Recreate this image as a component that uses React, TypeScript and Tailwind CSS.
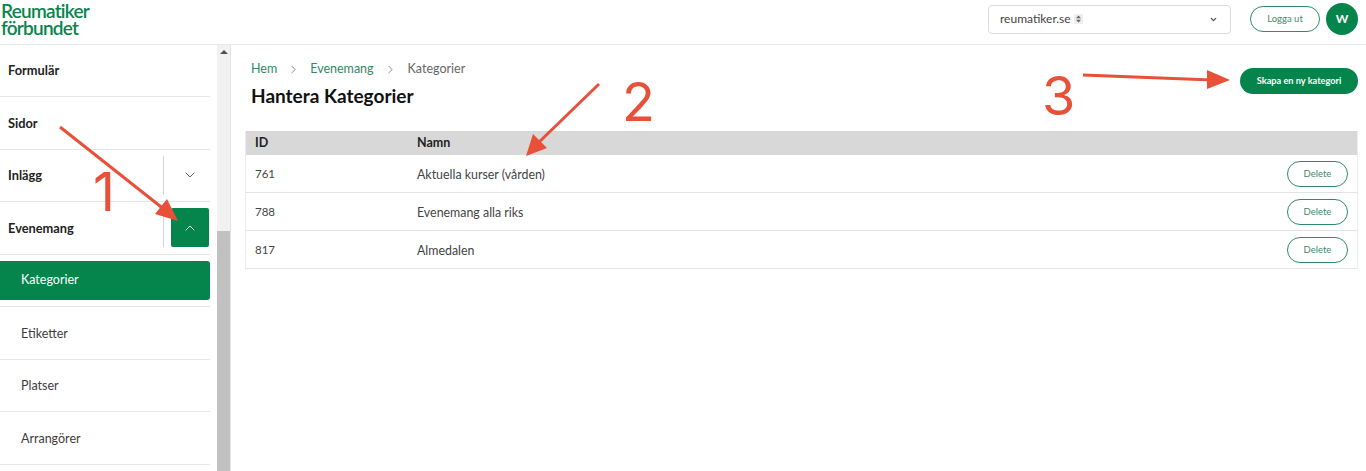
import React from "react";
import { ChevronDown, ChevronUp, ChevronRight } from "lucide-react";

function Row({ label, sub, toggle, active }: { label: string; sub?: boolean; toggle?: "down" | "up"; active?: boolean }) {
  return (
    <div className="h-[52.5px] border-b border-[#e6e6e6] flex items-center shrink-0">
      {active ? (
        <div className="flex-1 h-[39px] bg-[#05854b] rounded-r-[3px] flex items-center pl-[21px] pt-[1px] text-white text-[12.5px]">{label}</div>
      ) : (
        <div className={`flex-1 ${sub ? "text-[12.5px] pl-[21px] pt-[3px] text-[#3d3d3d]" : "text-[12.8px] pl-[8px] pt-[1px] font-bold text-[#222]"}`}>{label}</div>
      )}
      {toggle && (
        <div className="flex items-center h-[39px] mr-[1px]">
          <div className="w-px h-[39px] bg-[#d5d5d5]" />
          <div className={`ml-[7px] w-[38px] h-[39px] rounded-[2px] flex items-center justify-center ${toggle === "up" ? "bg-[#05854b] text-white" : "text-[#555]"}`}>
            {toggle === "up" ? <ChevronUp size={16} strokeWidth={1.4} /> : <ChevronDown size={16} strokeWidth={1.4} />}
          </div>
        </div>
      )}
    </div>
  );
}

function TableRow({ id, name }: { id: string; name: string }) {
  return (
    <div className="h-[38px] border-b border-[#e3e3e3] flex items-center text-[12.4px] text-[#444] shrink-0">
      <div className="w-[171px] pl-[9px] pt-[1px] text-[11.5px]">{id}</div>
      <div className="flex-1 pt-[3px]">{name}</div>
      <button className="mr-[9px] mt-[1px] w-[61px] h-[26px] border border-[#2f8a66] rounded-full text-[9.5px] text-[#3f8a6c] bg-white">Delete</button>
    </div>
  );
}

export default function App() {
  return (
    <div className="relative w-[1366px] h-[471px] overflow-hidden bg-white font-['Lato',sans-serif]">
      <header className="h-[45px] border-b border-[#e8e8e8] flex items-center">
        <div className="pl-[1px] -mt-[6px] text-[#05854b] text-[19px] leading-[17px] font-semibold tracking-[-0.75px]">
          <div>Reumatiker</div>
          <div>förbundet</div>
        </div>
        <div className="ml-auto flex items-center -mt-[6px]">
          <div className="w-[243px] h-[29px] border border-[#dcdcdc] rounded-[4px] flex items-center pl-[11px] pr-[12px] text-[12px] text-[#444]">
            <span>reumatiker.se</span>
            <svg className="ml-[3px] bg-[#eee]" width="9" height="10" viewBox="0 0 9 10" fill="#666">
              <polygon points="4.5,1.5 7,4.2 2,4.2" />
              <polygon points="4.5,8.5 7,5.8 2,5.8" />
            </svg>
            <ChevronDown size={9} strokeWidth={3} className="ml-auto text-[#444]" />
          </div>
          <button className="ml-[19px] w-[70px] h-[26px] border border-[#2f8a66] rounded-full text-[9.5px] text-[#3f8a6c] bg-white">Logga ut</button>
          <div className="ml-[6px] mr-[8px] w-[32px] h-[32px] rounded-full bg-[#05854b] text-white flex items-center justify-center text-[12px] font-bold">W</div>
        </div>
      </header>
      <div className="flex h-[426px]">
        <aside className="w-[217px] -mt-[0.5px] overflow-hidden flex flex-col pr-[7px]">
          <Row label="Formulär" />
          <Row label="Sidor" />
          <Row label="Inlägg" toggle="down" />
          <Row label="Evenemang" toggle="up" />
          <Row label="Kategorier" active />
          <Row label="Etiketter" sub />
          <Row label="Platser" sub />
          <Row label="Arrangörer" sub />
        </aside>
        <div className="w-[14px] bg-[#f1f1f1] border-r border-[#e3e3e3] flex flex-col">
          <div className="h-[186px] flex justify-center pt-[5px]">
            <div className="w-0 h-0 border-l-[4px] border-r-[4px] border-b-[4px] border-l-transparent border-r-transparent border-b-[#505050]" />
          </div>
          <div className="flex-1 bg-[#c1c1c1]" />
        </div>
        <main className="flex-1 pl-[14px] pr-[8px] flex flex-col">
          <div className="flex justify-between pl-[6px]">
            <div>
              <div className="mt-[15px] flex items-center text-[12.5px] text-[#2f8a66] leading-[18px]">
                <span>Hem</span>
                <ChevronRight size={13} strokeWidth={1.3} className="mx-[10px] text-[#555]" />
                <span>Evenemang</span>
                <ChevronRight size={13} strokeWidth={1.3} className="mx-[10.5px] text-[#555]" />
                <span className="text-[#666]">Kategorier</span>
              </div>
              <h1 className="mt-[6px] text-[19px] leading-[24px] font-bold text-[#111]">Hantera Kategorier</h1>
            </div>
            <button className="mt-[23px] w-[118px] h-[26px] rounded-full bg-[#05854b] text-white text-[9.2px] font-bold">Skapa en ny kategori</button>
          </div>
          <div className="mt-[23px] w-[1113px] border-x border-[#ececec] flex flex-col">
            <div className="h-[24px] bg-[#d8d8d8] flex items-center pt-[1px] text-[12.5px] font-bold text-[#222]">
              <div className="w-[171px] pl-[9px]">ID</div>
              <div>Namn</div>
            </div>
            <TableRow id="761" name="Aktuella kurser (vården)" />
            <TableRow id="788" name="Evenemang alla riks" />
            <TableRow id="817" name="Almedalen" />
          </div>
        </main>
      </div>

      <svg className="absolute inset-0 pointer-events-none" width="1366" height="471" viewBox="0 0 1366 471" fill="none">
        <g stroke="#e8503a" strokeWidth="3">
          <line x1="60" y1="127" x2="165" y2="210" />
          <line x1="599" y1="84" x2="535" y2="146" />
          <line x1="1083" y1="75" x2="1212" y2="80" />
        </g>
        <g fill="#e8503a">
          <polygon points="178,221 155,214 167,199" />
          <polygon points="526,156 533,134 547,148" />
          <polygon points="1230,80 1207,70 1207,89" />
        </g>
      </svg>
      <span className="absolute left-[93px] top-[162px] text-[54px] leading-[60px] text-[#e8503a] font-['Inter',sans-serif]">1</span>
      <span className="absolute left-[622px] top-[72px] text-[54px] leading-[60px] text-[#e8503a] font-['Inter',sans-serif]">2</span>
      <span className="absolute left-[1042px] top-[66px] text-[54px] leading-[60px] text-[#e8503a] font-['Inter',sans-serif]">3</span>
    </div>
  );
}
